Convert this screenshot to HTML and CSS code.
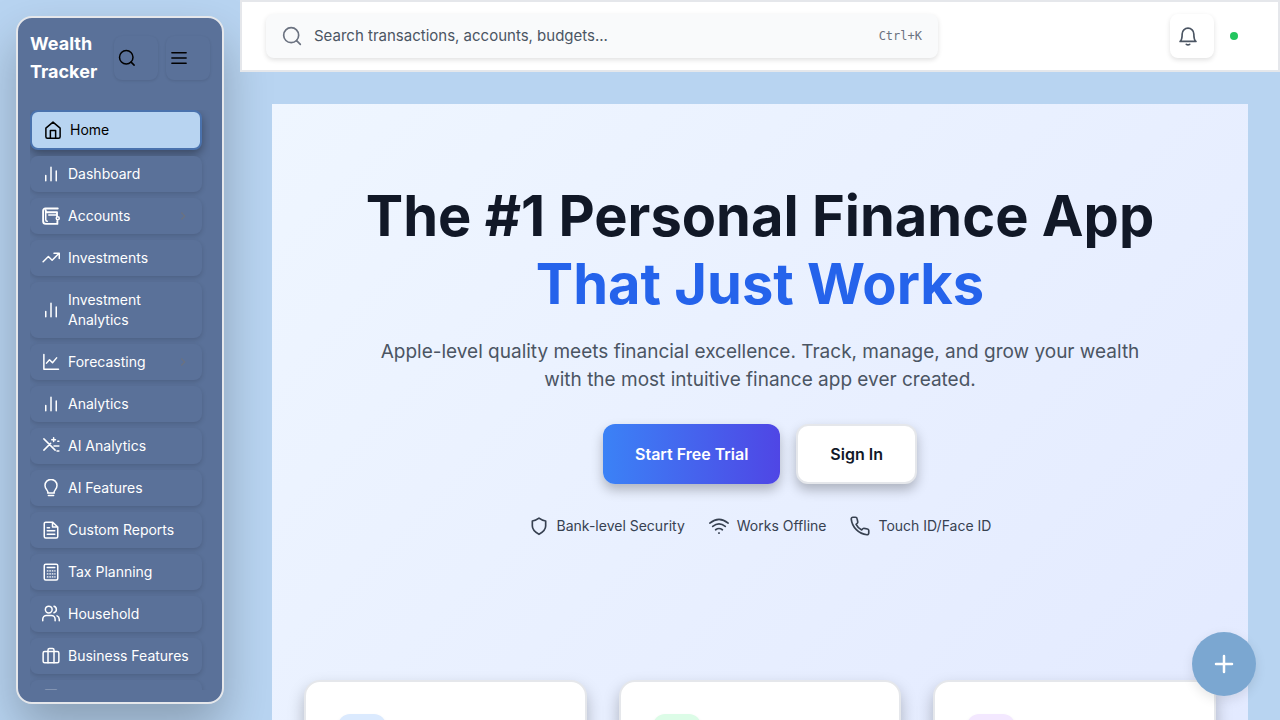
FILE: index.html
```html
<!DOCTYPE html>
<html lang="en">
<head>
<meta charset="utf-8">
<meta name="viewport" content="width=device-width, initial-scale=1">
<title>Wealth Tracker</title>
<link rel="stylesheet" href="styles.css">
</head>
<body>
<div class="app">
  <aside class="sidebar">
    <div class="sidebar-panel">
      <div class="brand">
        <div class="brand-name">Wealth Tracker</div>
        <div class="brand-actions">
          <button class="tool" type="button" aria-label="Search"><svg class="icon" viewBox="0 0 24 24"><circle cx="11" cy="11" r="9"/><path d="m21.5 21.5-4-4"/></svg></button>
          <button class="tool" type="button" aria-label="Menu"><svg class="icon" viewBox="0 0 24 24"><path d="M2.5 5h19M2.5 12h19M2.5 19h19"/></svg></button>
        </div>
      </div>
      <nav class="nav" aria-label="Main">
        <a class="nav-item active" href="#"><svg class="icon" viewBox="0 0 24 24"><path d="M2.500 9.500 12 1.500l9.500 8V21a2 2 0 0 1-2 2h-15a2 2 0 0 1-2-2zM8.500 23V12.500h7V23"/></svg><span>Home</span></a>
        <a class="nav-item" href="#"><svg class="icon" viewBox="0 0 24 24"><path d="M5 21v-7M12 21V3M19 21V8"/></svg><span>Dashboard</span></a>
        <a class="nav-item" href="#"><svg class="icon" viewBox="0 0 24 24"><path class="heavy" d="M21 2H4.500A3 3 0 0 0 1.500 5v14a3.500 3.500 0 0 0 3.500 3.500h15.500v-4M5 4.500A2.500 2.500 0 0 0 7.500 7H20v5"/><path d="M5 6v11a2 2 0 0 0 2 2M9 10.500h10"/><circle cx="21" cy="15" r="2"/></svg><span>Accounts</span><svg class="chevron" viewBox="0 0 24 24"><path d="m9 18 6-6-6-6"/></svg></a>
        <a class="nav-item" href="#"><svg class="icon" viewBox="0 0 24 24"><path d="M1.500 17 8.500 10l5 5 9-9M16 5.500h7v7"/></svg><span>Investments</span></a>
        <a class="nav-item" href="#"><svg class="icon" viewBox="0 0 24 24"><path d="M5 21v-7M12 21V3M19 21V8"/></svg><span>Investment Analytics</span></a>
        <a class="nav-item" href="#"><svg class="icon" viewBox="0 0 24 24"><path d="M2.500 2v19.500H22M6 13.500l4-4.500 4 4 5.500-6.500"/></svg><span>Forecasting</span><svg class="chevron" viewBox="0 0 24 24"><path d="m9 18 6-6-6-6"/></svg></a>
        <a class="nav-item" href="#"><svg class="icon" viewBox="0 0 24 24"><path d="M5 21v-7M12 21V3M19 21V8"/></svg><span>Analytics</span></a>
        <a class="nav-item" href="#"><svg class="icon" viewBox="0 0 24 24"><path d="m2.500 2.500 15 15M2.500 17.500l9-9M15.500 1v5M13 3.500h5M21 5.500h1.500M16 12h6.500M20 18.500h2.500"/></svg><span>AI Analytics</span></a>
        <a class="nav-item" href="#"><svg class="icon" viewBox="0 0 24 24"><path d="M8 18c0-3-4-4.500-4-9.500a8 8 0 0 1 16 0c0 5-4 6.500-4 9.500M7.500 18.500h9M8.500 22h7"/></svg><span>AI Features</span></a>
        <a class="nav-item" href="#"><svg class="icon" viewBox="0 0 24 24"><path d="M14 1.500H5a2 2 0 0 0-2 2v17a2 2 0 0 0 2 2h14a2 2 0 0 0 2-2V8zM14 1.500V8h7M7 9h3M7 13h10M7 17.500h10"/></svg><span>Custom Reports</span></a>
        <a class="nav-item" href="#"><svg class="icon" viewBox="0 0 24 24"><rect x="3" y="1.500" width="18" height="21" rx="2"/><path d="M7 6h10"/><path class="dots" d="M7 10.500h10.500M7 14.500h10.500M7 18.500h10.500"/></svg><span>Tax Planning</span></a>
        <a class="nav-item" href="#"><svg class="icon" viewBox="0 0 24 24"><circle cx="9" cy="6" r="4.500"/><path d="M1 21v-2a5 5 0 0 1 5-5h6.500a5 5 0 0 1 5 5v2M16 1.700a4.500 4.500 0 0 1 0 8.600M23 21v-2a5 5 0 0 0-3-4.500"/></svg><span>Household</span></a>
        <a class="nav-item" href="#"><svg class="icon" viewBox="0 0 24 24"><rect x="1.500" y="6" width="21" height="15" rx="2"/><path d="M8 21V4a2 2 0 0 1 2-2h4a2 2 0 0 1 2 2v17"/></svg><span>Business Features</span></a>
        <a class="nav-item" href="#" aria-label="More"><svg class="icon" viewBox="0 0 24 24"><rect x="3" y="2" width="18" height="20" rx="2"/></svg></a>
      </nav>
    </div>
  </aside>

  <div class="page">
    <header class="topbar">
      <label class="search">
        <svg class="icon icon-md" viewBox="0 0 24 24"><circle cx="11" cy="11" r="9"/><path d="m22 22-4.500-4.500"/></svg>
        <input class="search-input" type="text" aria-label="Search" placeholder="Search transactions, accounts, budgets...">
        <kbd class="shortcut">Ctrl+K</kbd>
      </label>
      <div class="topbar-end">
        <button class="bell" type="button" aria-label="Notifications"><svg class="icon icon-md" viewBox="0 0 24 24"><path d="M2.500 18.500c2-1.500 2.500-3.500 2.500-9a7 7 0 0 1 14 0c0 5.500.5 7.500 2.500 9zM10 22q2 1.500 4 0"/></svg></button>
        <span class="status" role="status" aria-label="Online"></span>
      </div>
    </header>

    <main class="main">
      <div class="landing">
        <section class="hero">
          <h1 class="headline">The #1 Personal Finance App <span class="headline-accent">That Just Works</span></h1>
          <p class="lead">Apple-level quality meets financial excellence. Track, manage, and grow your wealth with the most intuitive finance app ever created.</p>
          <div class="actions">
            <button class="btn btn-primary" type="button">Start Free Trial</button>
            <button class="btn btn-secondary" type="button">Sign In</button>
          </div>
          <ul class="perks">
            <li class="perk"><svg class="icon icon-md" viewBox="0 0 24 24"><path d="M12 2.500q4 3 8 3.500v6c0 5-3.500 7.500-8 10-4.500-2.500-8-5-8-10V6q4-.5 8-3.500z"/></svg>Bank-level Security</li>
            <li class="perk"><svg class="icon icon-md" viewBox="0 0 24 24"><path d="M1 8.500q11-9 22 0M4.500 12.500q7.500-6 15 0M8 16.500q4-3 8 0M11.700 20.500h.600"/></svg>Works Offline</li>
            <li class="perk"><svg class="icon icon-md" viewBox="0 0 24 24"><path d="M22.500 17.500v3a2 2 0 0 1-2.200 2C10.500 21.500 2.500 13.500 1.500 3.700a2 2 0 0 1 2-2.200h3a2 2 0 0 1 2 1.700l.8 3.800a2 2 0 0 1-.6 1.700L7.300 10a15 15 0 0 0 6.700 6.700l1.400-1.400a2 2 0 0 1 1.900-.5l3.600.8a2 2 0 0 1 1.600 1.900z"/></svg>Touch ID/Face ID</li>
          </ul>
        </section>
        <section class="cards">
          <article class="card"><div class="card-badge blue"></div></article>
          <article class="card"><div class="card-badge green"></div></article>
          <article class="card"><div class="card-badge purple"></div></article>
        </section>
      </div>
    </main>
  </div>
</div>
<button class="fab" type="button" aria-label="Add"><svg class="icon icon-lg" viewBox="0 0 24 24"><path class="heavy" d="M12 4v16M4 12h16"/></svg></button>
</body>
</html>
```
FILE: styles.css
```css
* { box-sizing: border-box; }

body {
  margin: 0;
  background: #b8d4f1;
  color: #111827;
  font-family: Inter, "Liberation Sans", sans-serif;
  font-size: 16px;
  line-height: 24px;
}

button, input { font: inherit; color: inherit; }
button { border: 0; cursor: pointer; }

.app {
  display: flex;
  height: 100vh;
  overflow: hidden;
}

.icon {
  flex: none;
  width: 18px;
  height: 18px;
  fill: none;
  stroke: currentColor;
  stroke-width: 2;
  stroke-linecap: round;
  stroke-linejoin: round;
}
.icon-md { width: 20px; height: 20px; }
.icon-lg { width: 24px; height: 24px; }
.heavy { stroke-width: 2.5; }
.dots { stroke-width: 1.5; stroke-dasharray: 1 2.3; }

/* Sidebar */
.sidebar {
  flex: none;
  width: 240px;
  padding: 16px;
}
.sidebar-panel {
  display: flex;
  flex-direction: column;
  gap: 24px;
  height: 100%;
  padding: 12px;
  border: 2px solid #e5e7eb;
  border-radius: 16px;
  background: #5a7199;
  box-shadow: 0 24px 48px rgba(0, 0, 0, 0.25);
}
.brand {
  display: flex;
  align-items: center;
  justify-content: space-between;
  gap: 8px;
  color: #fff;
  font-size: 18px;
  font-weight: 700;
  line-height: 28px;
}
.brand-actions { display: flex; gap: 8px; }
.tool {
  display: flex;
  align-items: center;
  width: 44px;
  height: 44px;
  padding: 4px;
  border-radius: 8px;
  background: #5a7199;
  color: #000;
  box-shadow: 0 1px 3px rgba(0, 0, 0, 0.1);
}
.nav {
  display: flex;
  flex: 1;
  flex-direction: column;
  gap: 6px;
  min-height: 0;
  padding-right: 8px;
  overflow: hidden;
}
.nav-item {
  display: flex;
  flex: none;
  align-items: center;
  gap: 8px;
  min-height: 36px;
  padding: 8px 12px;
  border-radius: 8px;
  background: #5a7199;
  color: #fff;
  font-size: 14px;
  line-height: 20px;
  text-decoration: none;
  box-shadow: 0 2px 5px rgba(0, 0, 0, 0.14);
}
.nav-item.active {
  border: 2px solid #4a72ad;
  background: #b8d4f1;
  color: #000;
  box-shadow: 0 4px 10px rgba(0, 0, 0, 0.35);
}
.chevron {
  width: 14px;
  height: 14px;
  margin-left: auto;
  fill: none;
  stroke: #6b7280;
  stroke-width: 2;
}

/* Top bar */
.page {
  position: relative;
  flex: 1;
  min-width: 0;
}
.topbar {
  display: flex;
  align-items: center;
  justify-content: space-between;
  gap: 24px;
  padding: 12px 24px;
  border: 2px solid #e5e7eb;
  background: #fff;
}
.search {
  display: flex;
  flex: 1;
  align-items: center;
  gap: 12px;
  max-width: 672px;
  height: 44px;
  padding: 0 16px;
  border-radius: 8px;
  background: #f9fafb;
  color: #6b7280;
  box-shadow: 0 2px 5px rgba(0, 0, 0, 0.12);
}
.search-input {
  flex: 1;
  min-width: 0;
  padding: 0;
  border: 0;
  outline: 0;
  background: transparent;
  color: #4b5563;
  font-size: 15px;
}
.search-input::placeholder { color: #4b5563; opacity: 1; }
.shortcut {
  font-family: "DejaVu Sans Mono", monospace;
  font-size: 12px;
  line-height: 16px;
}
.topbar-end {
  display: flex;
  align-items: center;
  gap: 16px;
  padding-right: 16px;
}
.bell {
  display: flex;
  align-items: center;
  width: 44px;
  height: 44px;
  padding: 8px;
  border-radius: 8px;
  background: #fff;
  color: #4b5563;
  box-shadow: 0 2px 5px rgba(0, 0, 0, 0.12);
}
.status {
  width: 8px;
  height: 8px;
  border-radius: 50%;
  background: #22c55e;
}

/* Landing content */
.main { padding: 32px; }
.landing {
  padding: 78px 32px;
  background: linear-gradient(to bottom right, #eff6ff, #e0e7ff);
}
.hero { text-align: center; }
.headline {
  margin: 0 0 20px;
  font-size: 56px;
  font-weight: 700;
  line-height: 68px;
}
.headline-accent { display: block; color: #2563eb; }
.lead {
  max-width: 768px;
  margin: 0 auto 30px;
  color: #4b5563;
  font-size: 19px;
  line-height: 28px;
}
.actions {
  display: flex;
  justify-content: center;
  gap: 16px;
  margin-bottom: 32px;
}
.btn {
  height: 60px;
  padding: 0 32px;
  border-radius: 12px;
  font-weight: 600;
  box-shadow: 0 6px 12px rgba(0, 0, 0, 0.25);
}
.btn-primary {
  background: linear-gradient(to right, #3b82f6, #4f46e5);
  color: #fff;
}
.btn-secondary {
  border: 2px solid #e5e7eb;
  background: #fff;
}
.perks {
  display: flex;
  justify-content: center;
  gap: 24px;
  margin: 0;
  padding: 0;
  list-style: none;
  color: #374151;
  font-size: 14px;
  line-height: 20px;
}
.perk {
  display: flex;
  align-items: center;
  gap: 8px;
}
.cards {
  display: grid;
  grid-template-columns: repeat(3, 1fr);
  gap: 32px;
  padding-top: 144px;
}
.card {
  min-height: 360px;
  padding: 32px;
  border: 2px solid #e5e7eb;
  border-radius: 16px;
  background: #fff;
  box-shadow: 0 8px 16px rgba(0, 0, 0, 0.25);
}
.card-badge {
  width: 48px;
  height: 48px;
  border-radius: 12px;
  box-shadow: 0 2px 4px rgba(0, 0, 0, 0.06);
}
.blue { background: #dbeafe; }
.green { background: #dcfce7; }
.purple { background: #f3e8ff; }

/* Floating action */
.fab {
  position: fixed;
  right: 24px;
  bottom: 24px;
  display: flex;
  align-items: center;
  justify-content: center;
  width: 64px;
  height: 64px;
  border-radius: 50%;
  background: #7ba7d1;
  color: #fff;
  box-shadow: 0 4px 12px rgba(0, 0, 0, 0.1);
}
```
